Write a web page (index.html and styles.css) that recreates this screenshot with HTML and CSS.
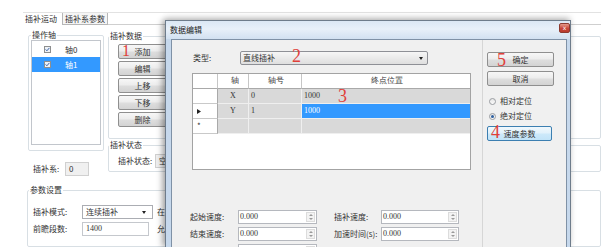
FILE: index.html
```html
<!DOCTYPE html>
<html>
<head>
    <meta charset="utf-8">
    <title>插补运动</title>
    <link rel="stylesheet" href="styles.css">
</head>
<body>

<div class="main">
    <div class="tabstrip">
        <div class="tab tab-on">插补运动</div>
        <div class="tab tab-off">插补系参数</div>
        <div class="tab-fill"></div>
    </div>

    <div class="page">
        <div class="col">
            <fieldset class="grp grp-axis">
                <legend>操作轴</legend>
                <div class="listbox">
                    <div class="item">
                        <svg class="chk" width="7" height="7" viewBox="0 0 7 7"><rect x="0.5" y="0.5" width="6" height="6" fill="#eef2f7" stroke="#8e8f8f"/><path d="M1.6 3.4 L2.9 4.8 L5.4 1.9" fill="none" stroke="#3d64a8" stroke-width="1"/></svg>
                        <span>轴0</span>
                    </div>
                    <div class="item item-sel">
                        <svg class="chk" width="7" height="7" viewBox="0 0 7 7"><rect x="0.5" y="0.5" width="6" height="6" fill="#eef2f7" stroke="#8e8f8f"/><path d="M1.6 3.4 L2.9 4.8 L5.4 1.9" fill="none" stroke="#3d64a8" stroke-width="1"/></svg>
                        <span>轴1</span>
                    </div>
                </div>
            </fieldset>
            <div class="sysrow">
                <span class="sys-label">插补系:</span>
                <div class="tb tb-ro tb-sys">0</div>
            </div>
        </div>

        <div class="col">
            <fieldset class="grp grp-data">
                <legend>插补数据</legend>
                <div class="btn-col">
                    <button class="btn">添加<span class="mark mark-1">1</span></button>
                    <button class="btn">编辑</button>
                    <button class="btn">上移</button>
                    <button class="btn">下移</button>
                    <button class="btn">删除</button>
                </div>
            </fieldset>
            <fieldset class="grp grp-state">
                <legend>插补状态</legend>
                <div class="staterow">
                    <span class="state-label">插补状态:</span>
                    <div class="tb tb-ro">空闲</div>
                </div>
            </fieldset>
        </div>
    </div>

    <fieldset class="grp grp-param">
        <legend>参数设置</legend>
        <div class="prow">
            <span class="plabel">插补模式:</span>
            <div class="pctl"><div class="combo">连续插补</div></div>
            <span class="ptail">在</span>
        </div>
        <div class="prow">
            <span class="plabel">前瞻段数:</span>
            <div class="pctl"><div class="tb tb-num">1400</div></div>
            <span class="ptail">允</span>
        </div>
    </fieldset>
</div>

<!-- dialog window on top of the main form -->
<div class="dlg">
    <div class="dlg-title">
        <span class="dlg-caption">数据编辑</span>
        <span class="dlg-close">x</span>
    </div>
    <div class="dlg-frame">
        <div class="dlg-body">
            <div class="dlg-left">
                <div class="typerow">
                    <span class="type-label">类型:</span>
                    <div class="combo combo-type">直线插补<span class="mark mark-2">2</span></div>
                </div>

                <div class="dgv">
                    <div class="dgv-row dgv-head">
                        <div class="c c-rh"></div>
                        <div class="c c-axis">轴</div>
                        <div class="c c-no">轴号</div>
                        <div class="c c-pos">终点位置</div>
                    </div>
                    <div class="dgv-row">
                        <div class="c c-rh"></div>
                        <div class="c c-axis">X</div>
                        <div class="c c-no">0</div>
                        <div class="c c-pos">1000<span class="mark mark-3">3</span></div>
                    </div>
                    <div class="dgv-row">
                        <div class="c c-rh"><svg width="4" height="5" viewBox="0 0 4 5"><path d="M0 0 L4 2.5 L0 5 Z" fill="#222"/></svg></div>
                        <div class="c c-axis">Y</div>
                        <div class="c c-no">1</div>
                        <div class="c c-pos c-sel">1000</div>
                    </div>
                    <div class="dgv-row">
                        <div class="c c-rh">*</div>
                        <div class="c c-axis"></div>
                        <div class="c c-no"></div>
                        <div class="c c-pos"></div>
                    </div>
                </div>

                <div class="frows">
                    <div class="frow">
                        <span class="flabel">起始速度:</span>
                        <div class="spin spin-a"><span class="spin-val">0.000</span><span class="spin-btn"><i class="up"></i><i class="dn"></i></span></div>
                        <span class="flabel flabel-2">插补速度:</span>
                        <div class="spin spin-b"><span class="spin-val">0.000</span><span class="spin-btn"><i class="up"></i><i class="dn"></i></span></div>
                    </div>
                    <div class="frow">
                        <span class="flabel">结束速度:</span>
                        <div class="spin spin-a"><span class="spin-val">0.000</span><span class="spin-btn"><i class="up"></i><i class="dn"></i></span></div>
                        <span class="flabel flabel-2">加速时间(s):</span>
                        <div class="spin spin-b"><span class="spin-val">0.000</span><span class="spin-btn"><i class="up"></i><i class="dn"></i></span></div>
                    </div>
                    <div class="frow">
                        <span class="flabel"></span>
                        <div class="spin spin-a"><span class="spin-val"></span><span class="spin-btn"><i class="up"></i><i class="dn"></i></span></div>
                    </div>
                </div>
            </div>

            <div class="dlg-right">
                <button class="btn btn-wide">确定<span class="mark mark-5">5</span></button>
                <button class="btn btn-wide btn-cancel">取消</button>
                <div class="radio-row radio-first"><span class="radio"></span>相对定位</div>
                <div class="radio-row"><span class="radio radio-on"></span>绝对定位</div>
                <button class="btn btn-focus">速度参数<span class="mark mark-4">4</span></button>
            </div>
        </div>
    </div>
</div>

</body>
</html>
```

FILE: styles.css
```css
* {
  box-sizing: border-box;
}

body {
  margin: 0;
  width: 601px;
  height: 247px;
  overflow: hidden;
  position: relative;
  background-color: #fff;
  color: #333;
  font-family: "Noto Sans CJK SC", "DejaVu Sans", sans-serif;
  font-size: 8px;
  line-height: 10px;
}

/* ---- main form ---- */

.main {
  padding-top: 12px;
}

.tabstrip {
  display: flex;
  height: 13px;
  margin-left: 23px;
  border-top: 1px solid #e2e2e2;
}

.tab {
  line-height: 11px;
  padding-left: 2px;
  white-space: nowrap;
}

.tab-on {
  width: 39px;
}

.tab-off {
  width: 46px;
  border: 1px solid #b6b6b6;
  border-top: 0;
  background-color: #f5f5f5;
  padding-left: 2px;
}

.tab-fill {
  flex: 1;
  border-bottom: 1px solid #cfcfcf;
}

.page {
  display: grid;
  grid-template-columns: 76px 1fr;
  column-gap: 4px;
  padding-left: 28px;
}

.col {
  display: flex;
  flex-direction: column;
  align-items: flex-start;
}

fieldset.grp {
  margin: 0;
  padding: 0;
  min-width: 0;
  border: 1px solid #d8dfe4;
  border-radius: 2px;
}

.grp legend {
  padding: 0 1px;
  line-height: 10px;
}

.grp-axis {
  width: 76px;
  margin-top: 5px !important;
  padding-bottom: 5px !important;
}

.grp-axis legend {
  margin-left: 2px;
}

.listbox {
  width: 70px;
  height: 105px;
  margin-left: 2px;
  padding-top: 1px;
  border: 1px solid #c2c6cc;
  background-color: #fff;
}

.item {
  display: flex;
  align-items: center;
  height: 15px;
}

.item .chk {
  margin-left: 12px;
}

.item span {
  margin-left: 14px;
}

.item-sel {
  background-color: #3399ff;
  color: #fff;
}

.sysrow {
  display: flex;
  align-items: center;
  height: 14px;
  margin-top: 11px;
  padding-left: 5px;
}

.sys-label {
  width: 32px;
}

.tb {
  height: 14px;
  padding-left: 3px;
  border: 1px solid #c5c8cd;
  background-color: #fff;
  line-height: 12px;
  white-space: nowrap;
  overflow: hidden;
}

.tb-ro {
  background-color: #f0f0f0;
  border-color: #d0d0d0;
}

.tb-sys {
  width: 24px;
}

.grp-data {
  width: 100%;
  margin-top: 6px !important;
  padding: 3px 0 11px 0 !important;
}

.btn-col {
  display: flex;
  flex-direction: column;
  gap: 2px;
  margin-left: 9px;
}

.btn {
  position: relative;
  display: block;
  width: 49px;
  height: 15px;
  margin: 0;
  padding: 0;
  border: 1px solid #8f8f8f;
  border-radius: 2px;
  background: linear-gradient(#f7f7f7, #ececec 48%, #dedede 52%, #d3d3d3);
  color: #333;
  font-family: inherit;
  font-size: 8px;
  line-height: 13px;
  text-align: center;
}

.grp-state {
  width: 100%;
  margin-top: 1px !important;
  padding: 4px 0 3px 0 !important;
}

.staterow {
  display: flex;
  align-items: center;
  height: 14px;
  margin-left: 9px;
}

.state-label {
  width: 37px;
}

.staterow .tb {
  width: 40px;
}

.grp-param {
  margin: 9px 0 0 27px !important;
  padding: 10px 0 10px 0 !important;
}

.grp-param legend {
  margin-left: 1px;
}

.prow {
  display: flex;
  align-items: center;
  height: 14px;
  margin-left: 5px;
}

.prow + .prow {
  margin-top: 3px;
}

.plabel {
  width: 49px;
}

.pctl {
  width: 71px;
}

.ptail {
  margin-left: 4px;
}

.tb-num {
  width: 67px;
  font-family: "Liberation Serif", serif;
}

.combo {
  position: relative;
  display: flex;
  align-items: center;
  width: 71px;
  height: 14px;
  padding-left: 3px;
  border: 1px solid #abadb3;
  background-color: #fff;
}

.combo::after {
  content: "";
  position: absolute;
  right: 6px;
  top: 5px;
  border-left: 2px solid transparent;
  border-right: 2px solid transparent;
  border-top: 3px solid #222;
}

/* red annotation numbers */
.mark {
  position: absolute;
  z-index: 2;
  color: #e0403a;
  font-family: "Liberation Serif", serif;
  font-size: 18px;
  line-height: 13px;
}

.mark-1 { left: 3px; top: -1px; font-size: 16px; }
.mark-2 { left: 51px; top: -2px; }
.mark-3 { left: 36px; top: 1px; }
.mark-4 { left: 3px; top: -1px; }
.mark-5 { left: 9px; top: 1px; }

/* ---- dialog ---- */

.dlg {
  position: absolute;
  left: 165px;
  top: 20px;
  width: 406px;
  height: 227px;
  overflow: hidden;
  border: 1px solid #6e7c8b;
  border-bottom: 0;
  background-color: #c6d8ec;
  box-shadow: -3px 0 6px rgba(0, 0, 0, 0.3), 0 -3px 6px rgba(0, 0, 0, 0.12);
}

.dlg-title {
  display: flex;
  justify-content: space-between;
  align-items: flex-start;
  height: 18px;
  padding-left: 4px;
  background: linear-gradient(#dbe7f4, #e8f0f9 45%, #d2e1f1);
}

.dlg-caption {
  line-height: 18px;
  color: #222;
}

.dlg-close {
  width: 11px;
  height: 10px;
  margin-top: 2px;
  border: 1px solid #8d3a30;
  border-radius: 2px;
  background: linear-gradient(#e59a8c, #c8473a 55%, #b93a2e);
  color: #fff;
  font-family: "DejaVu Sans", sans-serif;
  font-size: 6px;
  line-height: 8px;
  text-align: center;
}

.dlg-frame {
  padding: 0 3px 0 5px;
}

.dlg-body {
  display: flex;
  height: 208px;
  overflow: hidden;
  border: 1px solid #7f91a6;
  border-bottom: 0;
  background-color: #f0f0f0;
}

.dlg-left {
  width: 311px;
  border-right: 1px solid #d6d6d6;
}

.typerow {
  display: flex;
  align-items: center;
  height: 14px;
  margin: 11px 0 0 21px;
}

.type-label {
  width: 47px;
}

.combo-type {
  width: 188px;
  padding-left: 2px;
  border-color: #8e9096;
  border-radius: 2px;
  background: linear-gradient(#f6f6f6, #eaeaea 50%, #dfdfdf);
}

.combo-type::after {
  right: 4px;
}

/* data grid */
.dgv {
  width: 279px;
  height: 97px;
  margin: 8px 0 0 20px;
  border: 1px solid #a3a3a3;
  background-color: #fff;
}

.dgv-row {
  display: grid;
  grid-template-columns: 25px 31px 53px 1fr;
  height: 15px;
}

.c {
  position: relative;
  height: 15px;
  border-right: 1px solid #efefef;
  border-bottom: 1px solid #efefef;
  background-color: #d9d9d9;
  line-height: 14px;
  white-space: nowrap;
}

.c-rh {
  display: flex;
  align-items: center;
  padding-left: 4px;
  background-color: #fff;
  border-right-color: #a9a9a9;
  border-bottom-color: #c9c9c9;
}

.c-pos {
  border-right: 0;
}

.dgv-head .c {
  background-color: #fff;
  border-right-color: #c6c6c6;
  border-bottom-color: #a9a9a9;
}

.dgv-head .c-axis {
  padding-left: 3px;
}

.dgv-head .c-no,
.dgv-head .c-pos {
  text-align: center;
}

.c-axis {
  text-align: center;
  font-family: "Liberation Serif", serif;
}

.c-no,
.c-pos {
  padding-left: 2px;
  font-family: "Liberation Serif", serif;
}

.c-sel {
  background-color: #3399ff;
  color: #fff;
}

/* number inputs */
.frows {
  display: flex;
  flex-direction: column;
  gap: 3px;
  margin: 40px 0 0 18px;
}

.frow {
  display: flex;
  align-items: center;
  height: 14px;
}

.flabel {
  width: 48px;
}

.flabel-2 {
  width: 47px;
  margin-left: 17px;
}

.spin {
  display: flex;
  height: 14px;
  border: 1px solid #b5b8be;
  background-color: #fff;
}

.spin-a {
  width: 79px;
}

.spin-b {
  width: 78px;
}

.spin-val {
  flex: 1;
  padding-left: 1px;
  line-height: 12px;
  font-family: "Liberation Serif", serif;
}

.spin-btn {
  display: flex;
  flex-direction: column;
  justify-content: center;
  align-items: center;
  gap: 2px;
  width: 9px;
  margin: 1px 1px 1px 0;
  border: 1px solid #dcdcdc;
  background-color: #f3f3f3;
}

.spin-btn .up {
  border-left: 2px solid transparent;
  border-right: 2px solid transparent;
  border-bottom: 2px solid #9a9a9a;
}

.spin-btn .dn {
  border-left: 2px solid transparent;
  border-right: 2px solid transparent;
  border-top: 2px solid #9a9a9a;
}

/* right side of dialog */
.dlg-right {
  flex: 1;
  padding: 12px 0 0 4px;
}

.btn-wide {
  width: 67px;
}

.btn-cancel {
  margin-top: 4px;
}

.radio-row {
  display: flex;
  align-items: center;
  height: 14px;
  margin-top: 1px;
  padding-left: 2px;
}

.radio-first {
  margin-top: 8px;
}

.radio {
  position: relative;
  width: 7px;
  height: 7px;
  margin-right: 4px;
  border: 1px solid #9a9da2;
  border-radius: 50%;
  background: linear-gradient(#e6e6e6, #fafafa);
}

.radio-on::after {
  content: "";
  position: absolute;
  left: 1px;
  top: 1px;
  width: 3px;
  height: 3px;
  border-radius: 50%;
  background-color: #2e5f9e;
}

.btn-focus {
  width: 65px;
  margin-top: 3px;
  border-color: #3c7fb1;
  background: linear-gradient(#f0f8fd, #e1f1fb 48%, #cde9fa 52%, #c1e3f8);
}
```
